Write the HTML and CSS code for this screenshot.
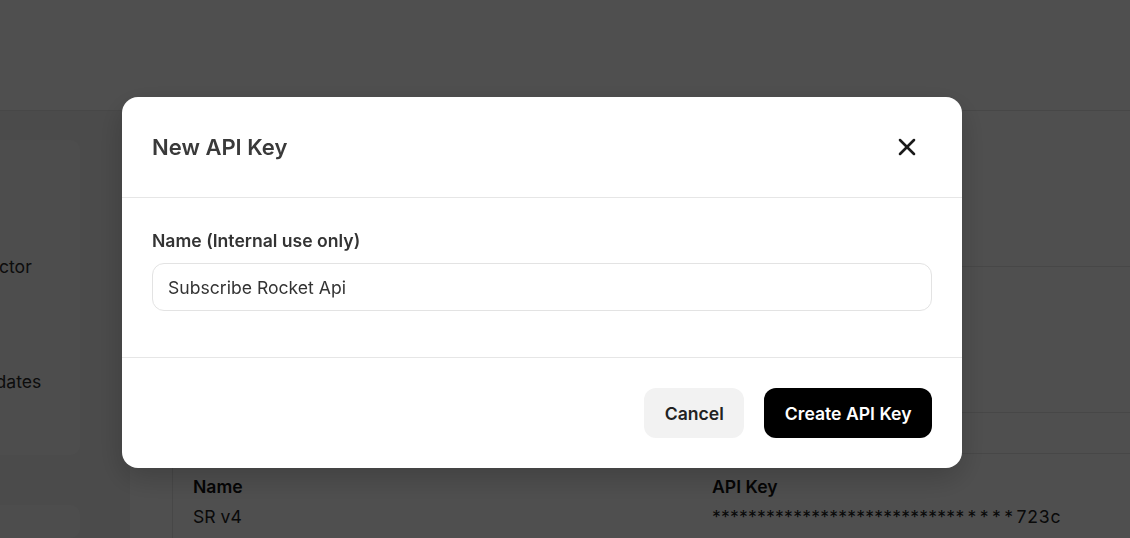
FILE: index.html
```html
<!DOCTYPE html>
<html lang="en">
<head>
  <meta charset="UTF-8" />
  <meta name="viewport" content="width=device-width, initial-scale=1" />
  <title>API Keys</title>
  <link rel="stylesheet" href="styles.css">
</head>
<body>

  <div class="page">
    <header class="topbar"></header>

    <div class="layout">
      <aside class="sidebar">
        <div class="side-card">
          <a class="side-link first">Payment Connector</a>
          <a class="side-link">Subscription Updates</a>
        </div>
        <div class="side-card small"></div>
      </aside>

      <main class="content">
        <div class="panel">
          <div class="panel-top"></div>
          <div class="panel-row"></div>
          <div class="panel-bar"></div>
          <table class="keys-table">
            <thead>
              <tr>
                <th class="col-name">Name</th>
                <th>API Key</th>
              </tr>
            </thead>
            <tbody>
              <tr>
                <td>SR v4</td>
                <td class="key"><span class="key-mask">***************************</span><span class="key-stars">*****</span><span class="key-tail">723c</span></td>
              </tr>
            </tbody>
          </table>
        </div>
      </main>
    </div>
  </div>

  <div class="overlay">
    <div class="modal">
      <div class="modal-header">
        <h2 class="modal-title">New API Key</h2>
        <button class="btn-close" aria-label="Close">
          <svg width="28" height="28" viewBox="0 0 24 24" fill="none" stroke="currentColor" stroke-width="2.2" stroke-linecap="round">
            <path d="M18 6 6 18" />
            <path d="m6 6 12 12" />
          </svg>
        </button>
      </div>

      <div class="modal-body">
        <label class="field-label" for="key-name">Name (Internal use only)</label>
        <input class="field-input" id="key-name" type="text" value="Subscribe Rocket Api" />
      </div>

      <div class="modal-footer">
        <button class="btn btn-cancel">Cancel</button>
        <button class="btn btn-primary">Create API Key</button>
      </div>
    </div>
  </div>

</body>
</html>
```

FILE: styles.css
```css
* {
  box-sizing: border-box;
}
html, body {
  margin: 0;
  width: 1130px;
  height: 538px;
  overflow: hidden;
}
body {
  font-family: Inter, "Liberation Sans", sans-serif;
  background: #fff;
  color: #1a1a1a;
}

/* page behind the dialog */
.topbar {
  height: 111px;
  background: #fff;
  border-bottom: 1px solid #e6e6e6;
}
.layout {
  display: flex;
  height: 427px;
  overflow: hidden;
}
.sidebar {
  width: 130px;
  flex-shrink: 0;
  background: #f2f2f2;
  padding-top: 29px;
}
.side-card {
  width: 200px;
  height: 315px;
  margin-left: -120px;
  background: #f8f8f8;
  border-radius: 10px;
  padding-top: 115px;
}
.side-card.small {
  height: 33px;
  margin-top: 50px;
  padding: 0;
}
.side-link {
  display: block;
  font-size: 17.6px;
  color: #2a2a2a;
  line-height: 24px;
  white-space: nowrap;
}
.side-link.first {
  margin-left: -13px;
}
.side-link + .side-link {
  margin-top: 91px;
  margin-left: -18px;
}

.content {
  flex: 1;
  background: #fff;
  padding-left: 42px;
}
.panel {
  border-left: 1px solid #e6e6e6;
  height: 100%;
}
.panel-top {
  height: 156px;
  border-bottom: 1px solid #e6e6e6;
}
.panel-row {
  height: 146px;
  border-bottom: 1px solid #e6e6e6;
}
.panel-bar {
  height: 41px;
  border-bottom: 1px solid #e6e6e6;
}
.keys-table {
  border-collapse: collapse;
  font-size: 17.6px;
  margin-top: 18px;
}
.keys-table th,
.keys-table td {
  text-align: left;
  padding: 0 0 0 20px;
  line-height: 30px;
  white-space: nowrap;
}
.keys-table th {
  font-weight: 600;
  color: #111;
}
.keys-table td {
  color: #222;
}
.col-name {
  width: 519px;
}
.key-mask {
  letter-spacing: 0.2px;
}
.key-stars {
  letter-spacing: 3.4px;
}
.key-tail {
  letter-spacing: 0.8px;
}

/* dialog */
.overlay {
  position: fixed;
  inset: 0;
  background: rgb(0 0 0 / 0.69);
  padding: 97px 0 0 122px;
}
.modal {
  width: 840px;
  background: #fff;
  border-radius: 16px;
  box-shadow: 0 10px 30px rgb(0 0 0 / 0.2);
}
.modal-header {
  height: 101px;
  padding: 0 30px;
  display: flex;
  align-items: center;
  justify-content: space-between;
  border-bottom: 1px solid #e6e6e6;
}
.modal-title {
  margin: 0;
  font-size: 22px;
  font-weight: 600;
  color: #3a3a3a;
}
.btn-close {
  width: 50px;
  height: 50px;
  border: none;
  background: none;
  color: #1a1a1a;
  display: flex;
  align-items: center;
  justify-content: center;
  padding: 0;
  cursor: pointer;
}
.modal-body {
  padding: 31px 30px 46px;
  border-bottom: 1px solid #e6e6e6;
}
.field-label {
  display: block;
  font-size: 17.6px;
  font-weight: 600;
  line-height: 24px;
  color: #333;
  margin-bottom: 10px;
}
.field-input {
  display: block;
  width: 100%;
  height: 48px;
  padding: 0 15px;
  border: 1px solid #e3e3e3;
  border-radius: 12px;
  font-family: inherit;
  font-size: 17.6px;
  color: #333;
  outline: none;
}
.modal-footer {
  padding: 30px 30px;
  display: flex;
  justify-content: flex-end;
  gap: 20px;
}
.btn {
  height: 50px;
  padding: 0 20.5px;
  border: none;
  border-radius: 12px;
  font-family: inherit;
  font-size: 17.6px;
  font-weight: 600;
  cursor: pointer;
}
.btn-cancel {
  background: #f2f2f2;
  color: #222;
}
.btn-primary {
  background: #000;
  color: #fff;
}
```
